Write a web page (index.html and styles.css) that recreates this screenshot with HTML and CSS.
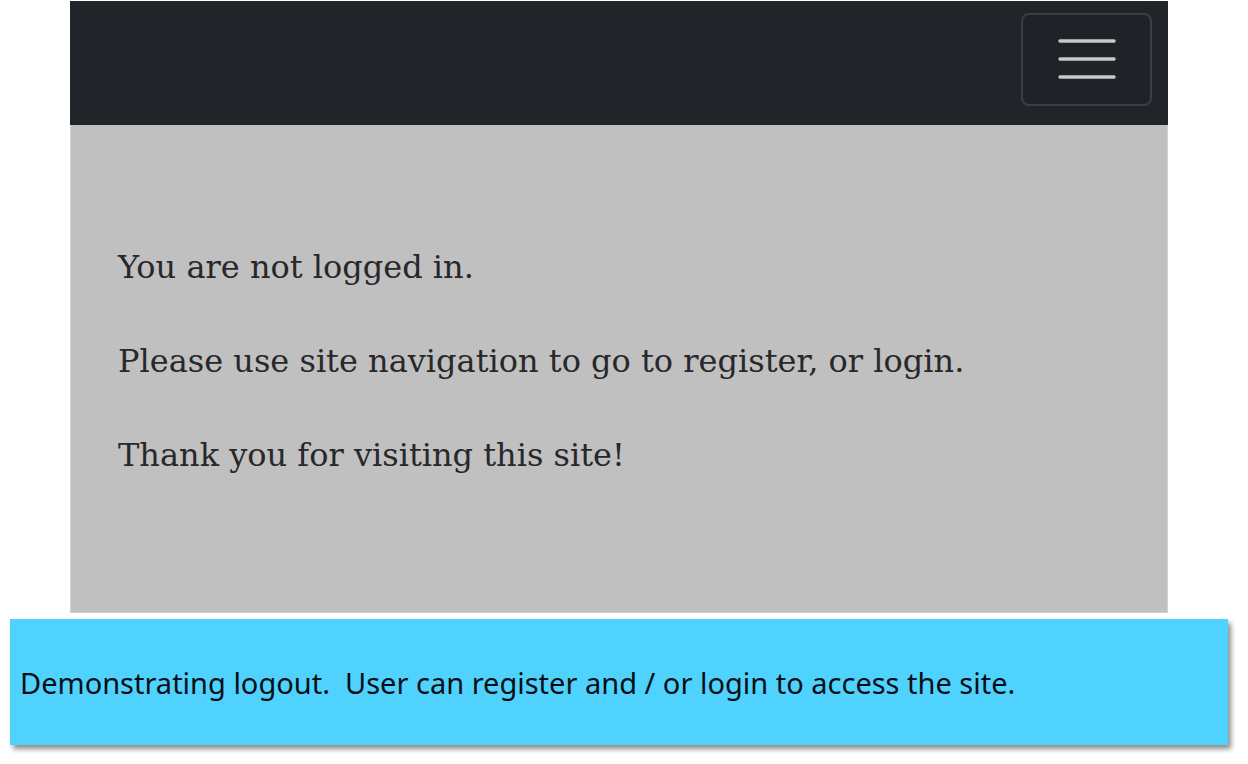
FILE: index.html
```html
<!DOCTYPE html>
<html>
<head>
<meta charset="utf-8">
<link rel="stylesheet" href="styles.css">
</head>
<body>
<div class="shot">
  <nav class="navbar">
    <button class="toggler" aria-label="menu">
      <svg width="58" height="44" viewBox="0 0 58 44">
        <g stroke="#c8c9cb" stroke-width="3.5" stroke-linecap="round">
          <line x1="2" y1="3" x2="56" y2="3"/>
          <line x1="2" y1="21" x2="56" y2="21"/>
          <line x1="2" y1="39" x2="56" y2="39"/>
        </g>
      </svg>
    </button>
  </nav>
  <main class="content">
    <p>You are not logged in.</p>
    <p>Please use site navigation to go to register, or login.</p>
    <p>Thank you for visiting this site!</p>
  </main>
</div>
<div class="callout">Demonstrating logout.&nbsp; User can register and / or login to access the site.</div>
</body>
</html>
```
FILE: styles.css
```css
html, body { margin: 0; padding: 0; background: #ffffff; }
body { width: 1248px; height: 764px; overflow: hidden; }
.shot {
  margin: 1px 0 0 70px;
  width: 1098px;
}
.navbar {
  height: 124px;
  background: #212529;
  display: flex;
  justify-content: flex-end;
  align-items: flex-start;
  padding: 12px 16px 0 0;
  box-sizing: border-box;
}
.toggler {
  width: 131px;
  height: 93px;
  background: #1f2227;
  border: 2px solid #3b3e43;
  border-radius: 8px;
  display: flex;
  align-items: center;
  justify-content: center;
  padding: 0;
}
.content {
  display: block;
  height: 488px;
  background: #c0c0c0;
  border: 1px solid #d2d2d2;
  border-top: none;
  box-sizing: border-box;
  padding: 123px 0 0 47px;
  font-family: "DejaVu Serif", Georgia, serif;
  font-size: 32px;
  color: #28282a;
}
.content p { margin: 0 0 56px 0; line-height: 38px; }
.callout {
  margin: 6px 0 0 10px;
  width: 1218px;
  height: 126px;
  background: #4fd2fe;
  box-shadow: 3px 4px 5px rgba(0,0,0,0.45);
  display: flex;
  align-items: center;
  padding-left: 10px;
  box-sizing: border-box;
  font-family: "Noto Sans", sans-serif;
  font-size: 29px;
  color: #0a0f14;
}
```
